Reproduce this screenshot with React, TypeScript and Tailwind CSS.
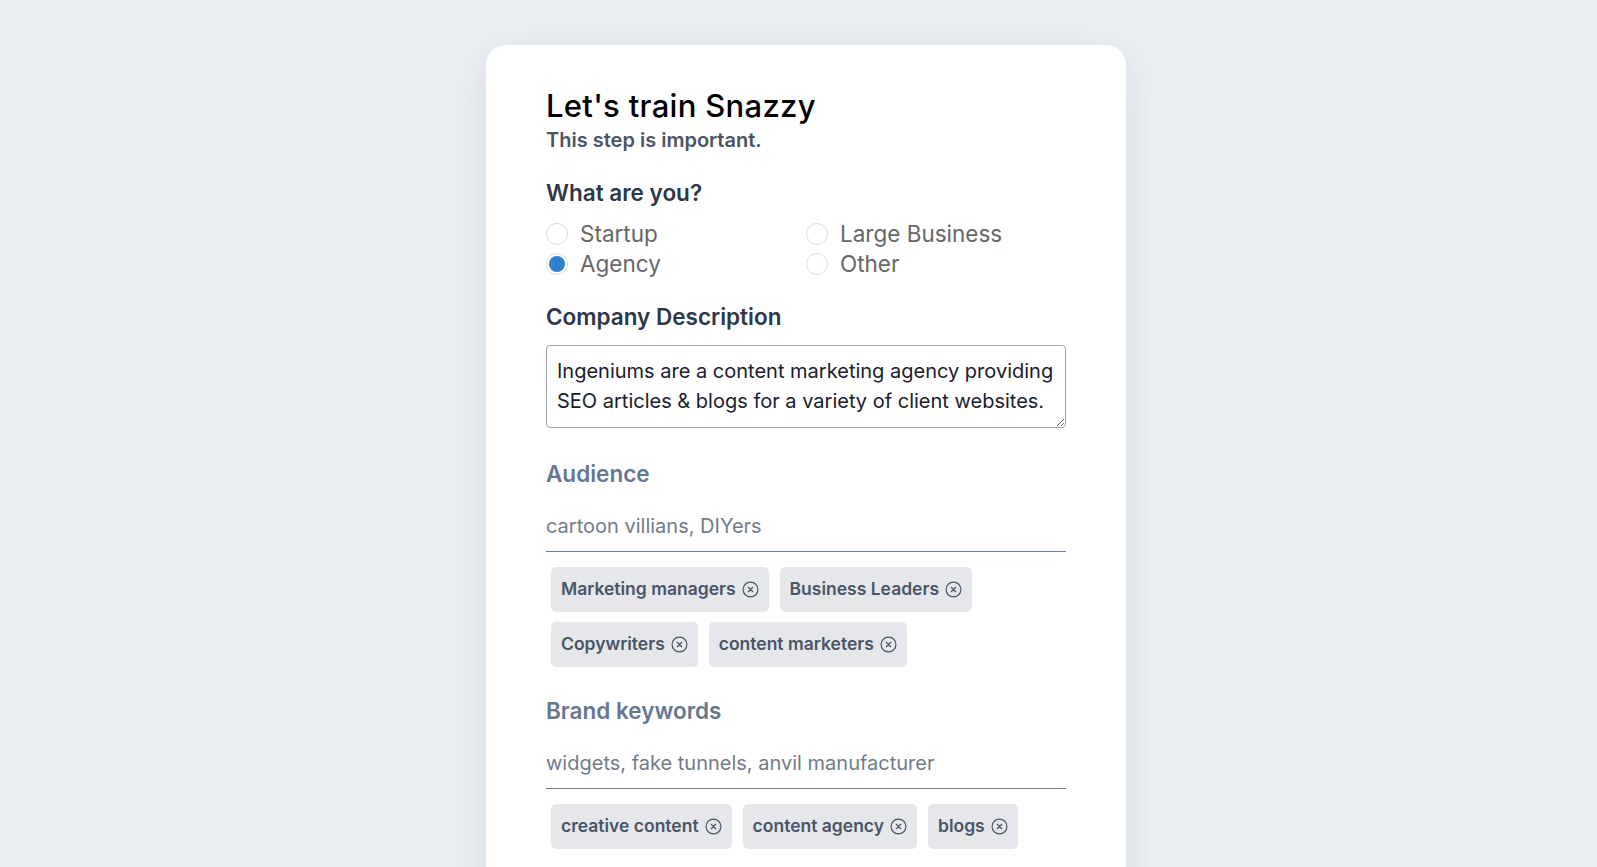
import { useState } from "react";

const types = ["Startup", "Large Business", "Agency", "Other"];

const audience = ["Marketing managers", "Business Leaders", "Copywriters", "content marketers"];
const keywords = ["creative content", "content agency", "blogs"];

function CloseIcon() {
  return (
    <svg width="17" height="17" viewBox="0 0 16 16" fill="none" stroke="currentColor" strokeWidth="1.1" strokeLinecap="round">
      <circle cx="8" cy="8" r="7" />
      <path d="M5.9 5.9l4.2 4.2M10.1 5.9l-4.2 4.2" />
    </svg>
  );
}

function Chip({ label }: { label: string }) {
  return (
    <span className="inline-flex items-center gap-[6px] h-[45px] px-[10px] rounded-[5px] bg-[#e5e7eb] text-[#4a5568] text-[17.5px] font-semibold">
      {label}
      <CloseIcon />
    </span>
  );
}

function TagInput({ label, placeholder, tags }: { label: string; placeholder: string; tags: string[] }) {
  return (
    <div>
      <p className="text-[22.5px] leading-[28px] font-semibold text-[#667791]">{label}</p>
      <input
        type="text"
        placeholder={placeholder}
        className="mt-3 w-full h-[52px] border-b border-[#718096] bg-transparent text-[20px] text-[#1a202c] outline-none placeholder:text-[#737b88]"
      />
      <div className="mt-[15px] pl-[5px] flex flex-wrap gap-x-[11px] gap-y-[10px]">
        {tags.map((t) => (
          <Chip key={t} label={t} />
        ))}
      </div>
    </div>
  );
}

export default function App() {
  const [kind, setKind] = useState("Agency");

  return (
    <div className="min-h-screen bg-[#ecf0f4] flex justify-center pt-[45px] pl-[15px] font-['Inter',sans-serif]">
      <div className="w-[640px] bg-white rounded-t-[20px] shadow-[0_10px_40px_rgba(100,116,139,0.18)] px-[60px] pt-[43px] pb-[60px]">
        <h1 className="text-[31px] leading-[36px] font-medium text-black tracking-[0.3px]">Let's train Snazzy</h1>
        <p className="mt-[4px] text-[20px] leading-[24px] font-semibold text-[#4b5563]">This step is important.</p>

        <p className="mt-[27px] text-[22.5px] leading-[28px] font-semibold text-[#2d3748]">What are you?</p>
        <div className="mt-[12px] grid grid-cols-2">
          {types.map((t) => (
            <label key={t} className="flex items-center gap-[12px] h-[30px] cursor-pointer" onClick={() => setKind(t)}>
              <span className="w-[22px] h-[22px] rounded-full border border-[#d9dde3] flex items-center justify-center">
                {kind === t && <span className="w-[16px] h-[16px] rounded-full bg-[#3182ce]" />}
              </span>
              <span className="text-[22.5px] text-[#666]">{t}</span>
            </label>
          ))}
        </div>

        <p className="mt-[24px] text-[22.5px] leading-[28px] font-semibold text-[#2d3748]">Company Description</p>
        <textarea
          className="mt-[14px] block w-full h-[83px] border border-[#a0a7b4] rounded-[4px] px-[10px] pt-[10px] pb-[8px] text-[20px] leading-[30px] text-[#1a202c] outline-none"
          defaultValue="Ingeniums are a content marketing agency providing SEO articles & blogs for a variety of client websites."
        />

        <div className="mt-[32px]">
          <TagInput label="Audience" placeholder="cartoon villians, DIYers" tags={audience} />
        </div>
        <div className="mt-[30px]">
          <TagInput label="Brand keywords" placeholder="widgets, fake tunnels, anvil manufacturer" tags={keywords} />
        </div>
      </div>
    </div>
  );
}
